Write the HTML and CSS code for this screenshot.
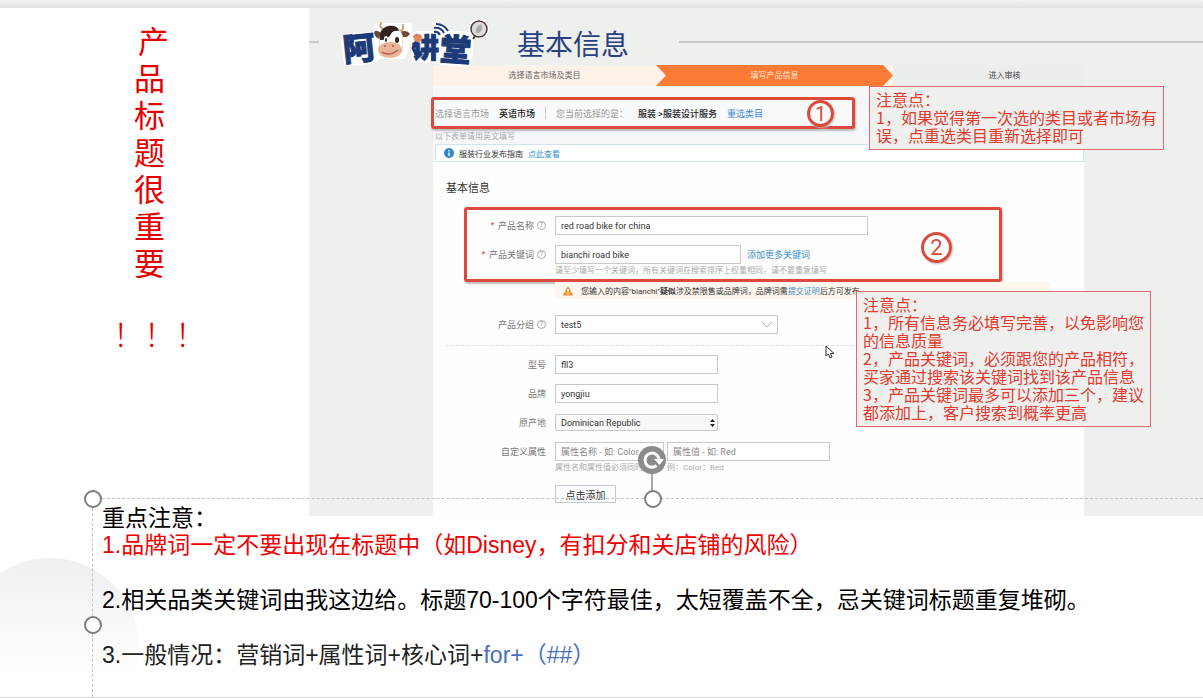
FILE: index.html
```html
<!DOCTYPE html>
<html lang="zh-CN">
<head>
    <meta charset="UTF-8">
    <meta name="viewport" content="width=device-width, initial-scale=1.0">
    <title>产品标题很重要</title>
    <link rel="stylesheet" href="styles.css">
</head>
<body>
    <div class="toolbar-edge"></div>
    <main class="slide">
        <div class="backdrop-circle"></div>

        <div class="slide-top">
            <aside class="side-title">
                <h1 class="vertical-title"><span class="first">产</span><span>品</span><span>标</span><span>题</span><span>很</span><span>重</span><span>要</span></h1>
                <p class="exclaim">！！！</p>
            </aside>

            <section class="lecture">
                <header class="lecture-header">
                    <span class="rule rule-left"></span>
                    <svg class="logo" viewBox="0 0 160 62" role="img" aria-label="阿牛讲堂">
                        <g class="logo-halo">
                            <rect x="10" y="24" width="30" height="26" rx="3" transform="rotate(-6 24 36)"/>
                            <rect x="79" y="22" width="24" height="26" rx="3"/>
                            <rect x="106" y="22" width="29" height="29" rx="3" transform="rotate(4 120 36)"/>
                            <path d="M42 14H74V26L68 44H44V26Z"/>
                            <path d="M98 13L110 18"/>
                            <circle cx="144" cy="17" r="7"/>
                        </g>
                        <g class="logo-text">
                            <text x="8" y="48" font-size="32" transform="rotate(-6 24 36)">阿</text>
                            <text x="77" y="46" font-size="27">讲</text>
                            <text x="105" y="49" font-size="31" transform="rotate(4 120 36)">堂</text>
                        </g>
                        <!-- cow -->
                        <path d="M47 22 Q40 16 39 21 Q41 28 48 27Z" fill="#6b4a3c"/>
                        <path d="M64 20 Q72 17 75 22 Q72 27 65 24Z" fill="#6b4a3c"/>
                        <path d="M48 17 Q44 15 46 11 M65 19 Q69 18 68 13" stroke="#c9a17c" stroke-width="2" fill="none" stroke-linecap="round"/>
                        <path d="M45 25 Q46 15 55 14 Q66 14 68 27 L67 40 H44Z" fill="#fff" stroke="#e6dcd6"/>
                        <path d="M45 28 Q43 17 53 14 Q63 13 64 19 Q58 18 56 22 Q53 28 45 28Z" fill="#33231f"/>
                        <ellipse cx="55" cy="38" rx="12" ry="8" fill="#eab498"/>
                        <ellipse cx="51" cy="27" rx="2" ry="3" fill="#fff"/>
                        <ellipse cx="51" cy="28" rx="1" ry="2" fill="#33231f"/>
                        <ellipse cx="62" cy="28" rx="2" ry="3" fill="#33231f"/>
                        <path d="M47 40 Q54 45 63 38" stroke="#b5574a" stroke-width="1.5" fill="none"/>
                        <circle cx="50" cy="34" r="1" fill="#b5574a"/>
                        <circle cx="58" cy="34" r="1" fill="#b5574a"/>
                        <!-- microphone and sound waves -->
                        <path d="M82 28L78 36L82 45" stroke="#1d3a78" stroke-width="3" fill="none"/>
                        <circle cx="83" cy="26" r="4" fill="#e8845a"/>
                        <path d="M99 20 Q103 19 105 23 M99 16 Q106 15 109 21 M101 12 Q109 12 113 19" stroke="#1d3a78" stroke-width="2" fill="none"/>
                        <circle cx="144" cy="17" r="8" fill="#dcdcda" stroke="#4d3b38" stroke-width="1.5"/>
                        <path d="M141 21 Q140 14 146 12 Q149 17 144 21Z" fill="#aaa"/>
                        <path d="M140 24 L138 27" stroke="#4d3b38" stroke-width="2"/>
                    </svg>
                    <h2 class="lecture-title">基本信息</h2>
                    <span class="rule rule-right"></span>
                </header>

                <div class="page">
                    <ol class="steps">
                        <li class="step done">选择语言市场及类目</li>
                        <li class="step active">填写产品信息</li>
                        <li class="step">进入审核</li>
                    </ol>

                    <div class="category-row">
                        <span class="muted">选择语言市场</span>
                        <strong>英语市场</strong>
                        <span class="divider"></span>
                        <span class="muted">您当前选择的是：</span>
                        <strong>服装 &gt;服装设计服务</strong>
                        <a href="#">重选类目</a>
                        <span class="marker marker-one">1</span>
                    </div>
                    <p class="english-tip">以下表单请用英文填写</p>
                    <div class="guide">
                        <svg class="info-icon" viewBox="0 0 10 10"><circle cx="5" cy="5" r="5" fill="#2e86cf"/><path d="M5 2v1.4M5 4.4v3.6" stroke="#fff" stroke-width="1.4"/></svg>
                        <span>服装行业发布指南</span>
                        <a href="#">点此查看</a>
                    </div>

                    <form class="product-form">
                        <h3>基本信息</h3>
                        <div class="group highlight">
                            <div class="row">
                                <label for="name"><i>*</i>产品名称<b class="help">?</b></label>
                                <input id="name" class="wide" type="text" value="red road bike for china">
                            </div>
                            <div class="row">
                                <label for="keyword"><i>*</i>产品关键词<b class="help">?</b></label>
                                <input id="keyword" class="keyword" type="text" value="bianchi road bike">
                                <a href="#">添加更多关键词</a>
                            </div>
                            <p class="hint">请至少填写一个关键词，所有关键词在搜索排序上权重相同，请不要重复填写</p>
                            <span class="marker marker-two">2</span>
                        </div>
                        <div class="group">
                            <p class="warning">
                                <svg class="warn-icon" viewBox="0 0 10 10"><path d="M5 0 L10 9.5 H0Z" fill="#f08c2e"/><path d="M5 3v3.4M5 7.2v1.2" stroke="#fff" stroke-width="1.2"/></svg>
                                <span>您输入的内容"bianchi"<strong>疑似</strong>涉及禁限售或品牌词，品牌词需<a href="#">提交证明</a>后方可发布</span>
                            </p>
                            <div class="row">
                                <label for="group">产品分组<b class="help">?</b></label>
                                <span class="select-box group-select">
                                    <select id="group"><option>test5</option></select>
                                    <svg class="chevron" viewBox="0 0 12 7"><path d="M1 1l5 5 5-5" fill="none" stroke="#b5b5b5"/></svg>
                                </span>
                            </div>
                        </div>
                        <hr>
                        <div class="group attributes">
                            <div class="row">
                                <label for="model">型号</label>
                                <input id="model" type="text" value="fll3">
                            </div>
                            <div class="row">
                                <label for="brand">品牌</label>
                                <input id="brand" type="text" value="yongjiu">
                            </div>
                            <div class="row">
                                <label for="origin">原产地</label>
                                <span class="select-box origin-select">
                                    <select id="origin"><option>Dominican Republic</option></select>
                                    <svg class="updown" viewBox="0 0 5 8"><path d="M0 3L2.500 0 5 3ZM0 5L2.500 8 5 5Z" fill="#222"/></svg>
                                </span>
                            </div>
                            <div class="row">
                                <label for="attr">自定义属性</label>
                                <input id="attr" class="attr-name" type="text" placeholder="属性名称 - 如: Color">
                                <input class="attr-value" type="text" aria-label="属性值" placeholder="属性值 - 如: Red">
                            </div>
                            <p class="hint">属性名和属性值必须同时填写，例：Color：Red</p>
                            <button class="add" type="button">点击添加</button>
                        </div>
                    </form>
                </div>

                <div class="callout callout-category">
                    <p>注意点：</p>
                    <p>1，如果觉得第一次选的类目或者市场有误，点重选类目重新选择即可</p>
                </div>
                <div class="callout callout-form">
                    <p>注意点：</p>
                    <p>1，所有信息务必填写完善，以免影响您的信息质量</p>
                    <p>2，产品关键词，必须跟您的产品相符，买家通过搜索该关键词找到该产品信息</p>
                    <p>3，产品关键词最多可以添加三个，建议都添加上，客户搜索到概率更高</p>
                </div>
                <svg class="cursor" viewBox="0 0 10 14"><path d="M1 1v10l2.500-2 1.500 4 2-1-1.500-3.500H9Z" fill="#fff" stroke="#333"/></svg>
            </section>
        </div>

        <!-- selected text box with its handles -->
        <section class="notes">
            <span class="handle handle-corner"></span>
            <span class="handle handle-side"></span>
            <svg class="rotate" viewBox="0 0 28 46">
                <path d="M14 28v18" stroke="#555"/>
                <circle cx="14" cy="14" r="14" fill="#8b8b8b"/>
                <path d="M18.500 19.500A7 7 0 1 1 21 14" fill="none" stroke="#fff" stroke-width="3"/>
                <path d="M16 13H26L21.500 19Z" fill="#fff"/>
            </svg>
            <span class="handle handle-top"></span>
            <p>重点注意：</p>
            <p class="danger">1.品牌词一定不要出现在标题中（如Disney，有扣分和关店铺的风险）</p>
            <p class="spaced">2.相关品类关键词由我这边给。标题70-100个字符最佳，太短覆盖不全，忌关键词标题重复堆砌。</p>
            <p class="spaced soft">3.一般情况：营销词+属性词+核心词+<span class="formula">for+（##）</span></p>
        </section>
    </main>
</body>
</html>
```
FILE: styles.css
```css
* {
    box-sizing: border-box;
}
body {
    margin: 0;
    min-height: 100vh;
    display: flex;
    flex-direction: column;
    background: #fff;
    font-family: "Liberation Sans", "Noto Sans CJK SC", sans-serif;
    overflow: hidden;
}
h1, h2, h3, p, ol {
    margin: 0;
    padding: 0;
    font-weight: normal;
}
a {
    color: #3b8fd0;
    text-decoration: none;
}
.toolbar-edge {
    height: 8px;
    background: linear-gradient(#f1f3f5, #dfe1e2);
}
.slide {
    flex: 1;
    position: relative;
    border-bottom: 1px solid #d4d4d4;
    overflow: hidden;
}
.backdrop-circle {
    position: absolute;
    left: -39px;
    top: 550px;
    width: 178px;
    height: 178px;
    border-radius: 50%;
    background: linear-gradient(#efeff3, #fff 65%);
}
.slide-top {
    display: flex;
}

/* red vertical title */
.side-title {
    flex: 0 0 309px;
    padding-top: 16px;
    color: #e60000;
    font-size: 31px;
}
.vertical-title {
    display: flex;
    flex-direction: column;
    align-items: center;
    padding-right: 10px;
    font-size: 31px;
    line-height: 37px;
}
.vertical-title .first {
    padding-left: 8px;
}
.exclaim {
    padding: 34px 0 0 113px;
    font-weight: 300;
    line-height: 37px;
}

/* lecture picture */
.lecture {
    flex: 1;
    position: relative;
    height: 508px;
    background: #eef0ee;
    font-family: Roboto, "Noto Sans CJK SC", sans-serif;
    font-size: 9px;
    color: #555;
}
.lecture-header {
    display: flex;
    align-items: flex-start;
    height: 57px;
}
.rule {
    height: 2px;
    margin-top: 33px;
    background: #c9cbca;
}
.rule-left {
    width: 10px;
}
.rule-right {
    flex: 1;
    margin-left: 50px;
}
.logo {
    width: 160px;
    height: 62px;
    margin: 4px 0 0 16px;
    z-index: 1;
}
.logo text {
    font-family: "Noto Sans CJK SC", sans-serif;
    font-weight: 900;
}
.logo-halo {
    fill: #fff;
    stroke: #fff;
    stroke-width: 6px;
    stroke-linejoin: round;
}
.logo-text {
    fill: #1d3a78;
    stroke: #1d3a78;
}
.lecture-title {
    margin-left: 22px;
    padding-top: 18px;
    font-size: 28px;
    line-height: 40px;
    color: #2a3f80;
}
.page {
    margin: 0 119px 0 124px;
    height: 451px;
    background: linear-gradient(#f6f7fa 96px, #fdfefd 96px);
}
.steps {
    display: flex;
    list-style: none;
    background: #fdf1e8;
    line-height: 21px;
    text-align: center;
    font-size: 8px;
}
.step {
    flex: 0 0 191px;
    background: #ebeeec;
    color: #444;
}
.step:last-child {
    padding-left: 32px;
}
.step.done {
    flex: 1;
    background: #fdf1e8;
    color: #666;
}
.step.active {
    flex: 0 0 237px;
    background: #fb7a34;
    color: #ffe6d6;
    clip-path: polygon(0 0, 227px 0, 100% 50%, 227px 100%, 0 100%, 10px 50%);
}
.category-row {
    position: relative;
    display: flex;
    align-items: center;
    width: 424px;
    height: 32px;
    margin: 11px 0 0 -2px;
    padding-left: 1px;
    gap: 10px;
    border: 3px solid #db4a3c;
    border-radius: 3px;
    box-shadow: 1px 2px 2px #bbb;
    background: #f8f9fb;
    white-space: nowrap;
}
.category-row strong {
    font-weight: 500;
    color: #222;
}
.category-row .divider {
    width: 1px;
    height: 12px;
    background: #ccc;
}
.muted {
    color: #999;
}
.marker {
    position: absolute;
    display: flex;
    align-items: center;
    justify-content: center;
    border: 3px solid #db4a3c;
    border-radius: 50%;
    color: #db4a3c;
    box-shadow: 1px 1px 2px #bbb;
}
.marker-one {
    left: 373px;
    top: 0;
    width: 27px;
    height: 27px;
    font-size: 20px;
}
.marker-two {
    left: 454px;
    top: 22px;
    width: 31px;
    height: 31px;
    font-size: 22px;
}
.english-tip {
    padding: 1px 0 0 2px;
    font-size: 8px;
    line-height: 14px;
    color: #aaa;
}
.guide {
    display: flex;
    align-items: center;
    gap: 5px;
    height: 18px;
    margin-left: 2px;
    padding-left: 8px;
    border: 1px solid #cfe3f3;
    background: #fff;
    font-size: 8px;
    color: #333;
}
.info-icon {
    width: 10px;
    height: 10px;
}

/* product form */
.product-form {
    padding-left: 31px;
}
.product-form h3 {
    margin-left: -18px;
    padding: 17px 0 8px;
    font-size: 11px;
    line-height: 20px;
    color: #333;
}
.group {
    position: relative;
    margin-right: 82px;
    border: 0 solid transparent;
    border-left-width: 3px;
}
.highlight {
    height: 75px;
    padding-top: 6px;
    border: 3px solid #db4a3c;
    border-radius: 3px;
    box-shadow: 1px 2px 2px #bbb;
}
.row {
    display: flex;
    align-items: center;
    height: 19px;
    margin-bottom: 10px;
}
.row label {
    flex: 0 0 79px;
    display: flex;
    align-items: center;
    justify-content: flex-end;
    margin-right: 9px;
    white-space: nowrap;
    color: #777;
}
.row label i {
    margin-right: 4px;
    color: #e0524d;
}
.help {
    width: 9px;
    height: 9px;
    margin-left: 3px;
    border: 1px solid #aaa;
    border-radius: 50%;
    font-size: 7px;
    font-weight: normal;
    line-height: 7px;
    text-align: center;
    color: #999;
}
.row input, .row select {
    width: 163px;
    height: 19px;
    padding: 0 5px;
    border: 1px solid #c8caca;
    border-radius: 0;
    background: #fff;
    font: inherit;
    color: #333;
}
.row input::placeholder {
    color: #888;
    opacity: 1;
}
.row input.wide {
    width: 313px;
}
.row input.keyword {
    width: 186px;
    margin-right: 6px;
}
.row input.attr-name {
    width: 109px;
    margin-right: 3px;
}
.highlight .row:nth-child(2) {
    margin-bottom: 0;
}
.hint {
    padding-left: 88px;
    font-size: 8px;
    line-height: 14px;
    white-space: nowrap;
    color: #aaa;
}
.warning {
    display: flex;
    align-items: center;
    gap: 8px;
    height: 17px;
    margin: 0 -48px 16px 88px;
    padding-left: 8px;
    background: #fdf6ee;
    font-size: 8px;
    white-space: nowrap;
    color: #333;
}
.warn-icon {
    width: 10px;
    height: 10px;
}
.select-box {
    position: relative;
    display: flex;
}
.select-box svg {
    position: absolute;
    pointer-events: none;
}
.row select {
    appearance: none;
}
.group-select select {
    width: 223px;
}
.chevron {
    right: 5px;
    top: 6px;
    width: 12px;
    height: 7px;
}
.origin-select select {
    height: 17px;
    border-radius: 2px;
    background: #f7f8f7;
}
.updown {
    right: 3px;
    top: 5px;
    width: 5px;
    height: 8px;
}
hr {
    margin: 11px 0 9px -18px;
    border: 0;
    border-top: 1px dashed #dcdcdc;
}
.attributes .row:nth-child(4) {
    margin-bottom: 0;
}
.add {
    width: 61px;
    height: 18px;
    margin: 10px 0 0 88px;
    padding: 0;
    border: 1px solid #c5cbd4;
    background: #fafbfc;
    font: inherit;
    font-size: 10px;
    color: #333;
}

/* red callouts laid over the picture */
.callout {
    position: absolute;
    width: 295px;
    padding: 3px 6px 5px;
    border: 1px solid #de6b72;
    background: #eff0ee;
    font-family: "Noto Sans CJK SC", sans-serif;
    font-size: 16px;
    line-height: 18px;
    color: #e23a2e;
}
.callout-category {
    left: 560px;
    top: 78px;
}
.callout-form {
    left: 547px;
    top: 283px;
}
.cursor {
    position: absolute;
    left: 516px;
    top: 337px;
    width: 10px;
    height: 14px;
}

/* selected text box */
.notes {
    position: absolute;
    left: 92px;
    right: 0;
    top: 490px;
    bottom: 0;
    padding: 6px 0 0 9px;
    border: 1px dashed #c2c4c4;
    border-width: 1px 0 0 1px;
    font-size: 23px;
    font-weight: 300;
    line-height: 27px;
    white-space: nowrap;
    color: #000;
}
.notes .danger {
    color: #f00000;
}
.notes .spaced {
    margin-top: 28px;
}
.notes .soft {
    color: #222;
}
.formula {
    color: #4a6fbf;
}
.handle {
    position: absolute;
    width: 18px;
    height: 18px;
    border: 2px solid #7c7c7c;
    border-radius: 50%;
    background: #fff;
}
.handle-corner {
    left: -9px;
    top: -9px;
}
.handle-side {
    left: -9px;
    top: 117px;
}
.handle-top {
    left: 551px;
    top: -9px;
}
.rotate {
    position: absolute;
    left: 545px;
    top: -53px;
    width: 28px;
    height: 46px;
}
```
